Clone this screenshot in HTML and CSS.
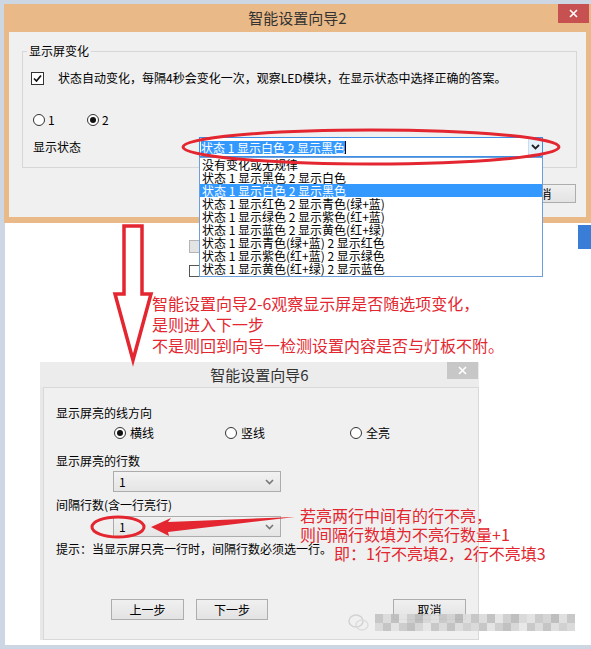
FILE: index.html
```html
<!DOCTYPE html>
<html lang="zh-CN">
<head>
  <meta charset="UTF-8" />
  <meta name="viewport" content="width=device-width, initial-scale=1.0"/>
  <title>智能设置向导</title>
  <link rel="stylesheet" href="styles.css">
</head>
<body>
<div class="desk">
  <div class="sheet"></div>

  <!-- Wizard step 2 -->
  <div class="win win-step2">
    <div class="titlebar">
      <span class="title">智能设置向导2</span>
      <span class="close close-red">
        <svg width="9" height="9" viewBox="0 0 9 9"><path d="M1 1L8 8M8 1L1 8" stroke="#fff" stroke-width="1.6"/></svg>
      </span>
    </div>
    <div class="client">
      <fieldset class="group">
        <legend>显示屏变化</legend>
        <div class="check-row">
          <span class="checkbox">
            <svg width="11" height="11" viewBox="0 0 11 11"><path d="M2 5.5L4.5 8L9 2.5" fill="none" stroke="#111" stroke-width="1.7"/></svg>
          </span>
          <span>状态自动变化，每隔4秒会变化一次，观察LED模块，在显示状态中选择正确的答案。</span>
        </div>
        <div class="radio-row">
          <span class="radio-item opt-1"><span class="radio"></span>1</span>
          <span class="radio-item"><span class="radio on"></span>2</span>
        </div>
        <div class="state-row">
          <span class="state-label">显示状态</span>
          <div class="combo">
            <span class="combo-sel">状态 1 显示白色 2 显示黑色</span><span class="caret"></span>
            <span class="combo-btn">
              <svg width="9" height="6" viewBox="0 0 9 6"><path d="M1 1L4.5 4.5L8 1" fill="none" stroke="#222" stroke-width="1.8"/></svg>
            </span>
          </div>
        </div>
      </fieldset>
      <div class="win-buttons"><span class="btn btn-back">取消</span></div>
    </div>
  </div>

  <!-- controls of a window lying underneath -->
  <div class="ghost-btn"></div>
  <div class="ghost-check"></div>
  <div class="scroll-thumb"></div>

  <!-- open drop-down of the combo -->
  <ul class="dropdown">
    <li>没有变化或无规律</li>
    <li>状态 1 显示黑色 2 显示白色</li>
    <li class="hot">状态 1 显示白色 2 显示黑色</li>
    <li>状态 1 显示红色 2 显示青色(绿+蓝)</li>
    <li>状态 1 显示绿色 2 显示紫色(红+蓝)</li>
    <li>状态 1 显示蓝色 2 显示黄色(红+绿)</li>
    <li>状态 1 显示青色(绿+蓝) 2 显示红色</li>
    <li>状态 1 显示紫色(红+蓝) 2 显示绿色</li>
    <li>状态 1 显示黄色(红+绿) 2 显示蓝色</li>
  </ul>

  <div class="note note-top">
    <div>智能设置向导2-6观察显示屏是否随选项变化，</div>
    <div>是则进入下一步</div>
    <div>不是则回到向导一检测设置内容是否与灯板不附。</div>
  </div>

  <!-- Wizard step 6 -->
  <div class="win win-step6">
    <div class="titlebar titlebar-gray">
      <span class="title">智能设置向导6</span>
      <span class="close close-gray">
        <svg width="9" height="9" viewBox="0 0 9 9"><path d="M1 1L8 8M8 1L1 8" stroke="#fff" stroke-width="1.6"/></svg>
      </span>
    </div>
    <div class="client client-step6">
      <div class="line">显示屏亮的线方向</div>
      <div class="dir-row">
        <span class="radio-item dir-h"><span class="radio on"></span>横线</span>
        <span class="radio-item dir-v"><span class="radio"></span>竖线</span>
        <span class="radio-item"><span class="radio"></span>全亮</span>
      </div>
      <div class="line gap-lg">显示屏亮的行数</div>
      <div class="select select-first">
        <span>1</span>
        <svg width="9" height="6" viewBox="0 0 9 6"><path d="M1 1L4.5 4.5L8 1" fill="none" stroke="#777" stroke-width="1.6"/></svg>
      </div>
      <div class="line">间隔行数(含一行亮行)</div>
      <div class="select select-second">
        <span>1</span>
        <svg width="9" height="6" viewBox="0 0 9 6"><path d="M1 1L4.5 4.5L8 1" fill="none" stroke="#777" stroke-width="1.6"/></svg>
      </div>
      <div class="line hint">提示：当显示屏只亮一行时，间隔行数必须选一行。</div>
      <div class="btn-row">
        <span class="btn">上一步</span>
        <span class="btn btn-next">下一步</span>
        <span class="btn btn-cancel">取消</span>
      </div>
    </div>
  </div>

  <div class="note note-side">
    <div>若亮两行中间有的行不亮，</div>
    <div>则间隔行数填为不亮行数量+1</div>
  </div>
  <div class="note note-eg">即：1行不亮填2，2行不亮填3</div>

  <!-- blurred watermark -->
  <svg class="wm-icon" width="24" height="20" viewBox="0 0 24 20">
    <ellipse cx="9" cy="8" rx="7" ry="6" fill="none" stroke="#d2d2d2" stroke-width="1.5"/>
    <ellipse cx="15" cy="12" rx="6" ry="5" fill="none" stroke="#dcdcdc" stroke-width="1.5"/>
  </svg>
  <div class="watermark"></div>

  <!-- red marks drawn over the screenshots -->
  <svg class="marks" width="591" height="649" viewBox="0 0 591 649">
    <ellipse cx="371" cy="147" rx="188" ry="17" fill="none" stroke="#e3262f" stroke-width="3"/>
    <polygon points="124,226 142,226 142,294 151,294 133,360 115,294 124,294" fill="none" stroke="#e3262f" stroke-width="3.5"/>
    <ellipse cx="118" cy="527" rx="26" ry="10" fill="none" stroke="#e3262f" stroke-width="3"/>
    <polygon points="151,527 171,518 168,522 295,517 168,532 169,536" fill="#e3262f"/>
  </svg>
</div>
</body>
</html>
```

FILE: styles.css
```css
* {
  box-sizing: border-box;
}

body {
  margin: 0;
  font-family: "Noto Sans CJK SC", "Noto Sans", sans-serif;
  font-size: 12px;
  color: #000;
}

.desk {
  position: relative;
  width: 591px;
  height: 649px;
  padding: 4px 0 4px 5px;
  background-color: #cdd7e3;
  overflow: hidden;
}

.sheet {
  width: 100%;
  height: 100%;
  background-color: #fff;
}

/* windows */
.win {
  position: absolute;
  display: flex;
  flex-direction: column;
}

.win-step2 {
  left: 4px;
  top: 4px;
  width: 587px;
  height: 219px;
  background-color: #e9b987;
}

.win-step6 {
  left: 40px;
  top: 362px;
  width: 439px;
  height: 278px;
  background-color: #e8e8e8;
}

.titlebar {
  position: relative;
  height: 28px;
  flex-shrink: 0;
  display: flex;
  align-items: center;
  justify-content: center;
}

.titlebar-gray {
  height: 25px;
  background-color: #ececec;
}

.title {
  font-size: 15px;
  line-height: 18px;
  color: #333;
}

.close {
  position: absolute;
  top: 0;
  display: flex;
  align-items: center;
  justify-content: center;
}

.close-red {
  right: 2px;
  width: 31px;
  height: 19px;
  background-color: #c75050;
}

.close-gray {
  right: 1px;
  width: 31px;
  height: 17px;
  background-color: #c7c7c7;
}

.client {
  flex: 1;
  margin: 0 5px 6px 5px;
  background-color: #f0f0f0;
}

/* step 2 content */
.group {
  margin: 12px 0 0 13px;
  width: 555px;
  min-width: 0;
  padding: 0 8px 10px 8px;
  border: 1px solid #d7d7d7;
}

.group legend {
  padding: 0 2px;
  margin-left: -4px;
  line-height: 14px;
}

.check-row {
  display: flex;
  align-items: center;
  gap: 14px;
  height: 14px;
  margin-top: 13px;
  line-height: 14px;
}

.checkbox {
  width: 13px;
  height: 13px;
  border: 1px solid #333;
  background-color: #fff;
  display: flex;
  align-items: center;
  justify-content: center;
}

.radio-row {
  display: flex;
  align-items: center;
  height: 14px;
  margin-top: 28px;
  padding-left: 2px;
  line-height: 14px;
}

.radio-item {
  display: flex;
  align-items: center;
  gap: 3px;
}

.opt-1 {
  width: 54px;
}

.radio {
  width: 12px;
  height: 12px;
  border: 1px solid #333;
  border-radius: 50%;
  background-color: #fff;
  display: flex;
  align-items: center;
  justify-content: center;
}

.radio.on::after {
  content: "";
  width: 6px;
  height: 6px;
  border-radius: 50%;
  background-color: #111;
}

.state-row {
  display: flex;
  align-items: center;
  height: 20px;
  margin-top: 10px;
  padding-left: 2px;
}

.state-label {
  width: 166px;
  line-height: 14px;
}

.combo {
  position: relative;
  width: 344px;
  height: 20px;
  border: 1px solid #3d8ee6;
  background-color: #fff;
  display: flex;
  align-items: center;
  padding-left: 1px;
}

.combo-sel {
  line-height: 13px;
  background-color: #3399ff;
  color: #fff;
  white-space: nowrap;
}

.caret {
  width: 1px;
  height: 13px;
  background-color: #000;
}

.combo-btn {
  position: absolute;
  right: 0;
  top: 0;
  width: 14px;
  height: 18px;
  display: flex;
  align-items: center;
  justify-content: center;
  background-color: #e5f1fb;
  border-left: 1px solid #c6dcef;
}

.win-buttons {
  display: flex;
  justify-content: flex-end;
  margin-top: 16px;
  padding-right: 10px;
}

.btn {
  height: 21px;
  width: 73px;
  border: 1px solid #adadad;
  background: linear-gradient(#f0f0f0, #e3e3e3);
  display: flex;
  align-items: center;
  justify-content: center;
  font-size: 12px;
  line-height: 14px;
}

.btn-back {
  height: 19px;
}

/* bits of a window under the dialog */
.ghost-btn {
  position: absolute;
  left: 189px;
  top: 240px;
  width: 60px;
  height: 13px;
  background-color: #e3e3e3;
  border: 1px solid #b4b4b4;
}

.ghost-check {
  position: absolute;
  left: 189px;
  top: 265px;
  width: 13px;
  height: 12px;
  background-color: #fff;
  border: 1px solid #555;
}

.scroll-thumb {
  position: absolute;
  left: 578px;
  top: 225px;
  width: 13px;
  height: 24px;
  background-color: #3a7dd6;
}

.dropdown {
  position: absolute;
  left: 199px;
  top: 157px;
  width: 344px;
  height: 120px;
  margin: 0;
  padding: 0;
  list-style: none;
  background-color: #fff;
  border: 1px solid #6f9fd8;
}

.dropdown li {
  height: 13px;
  line-height: 13px;
  padding-left: 2px;
  white-space: nowrap;
}

.dropdown li.hot {
  background-color: #3399ff;
  color: #fff;
}

/* red notes */
.note {
  position: absolute;
  color: #e3262f;
  font-size: 16px;
  white-space: nowrap;
}

.note-top {
  left: 152px;
  top: 293px;
  line-height: 21px;
}

.note-side {
  left: 300px;
  top: 506px;
  line-height: 19px;
}

.note-eg {
  left: 334px;
  top: 544px;
  line-height: 19px;
}

/* step 6 content */
.client-step6 {
  margin: 0 0 0 3px;
  padding: 18px 0 0 12px;
  border: 1px solid #d9d9d9;
}

.line {
  line-height: 14px;
  white-space: nowrap;
}

.gap-lg {
  margin-top: 14px;
}

.dir-row {
  display: flex;
  align-items: center;
  height: 14px;
  margin-top: 6px;
  padding-left: 58px;
  line-height: 14px;
}

.dir-row .radio-item {
  gap: 4px;
}

.dir-h {
  width: 111px;
}

.dir-v {
  width: 125px;
}

.select {
  width: 168px;
  height: 21px;
  margin-left: 57px;
  border: 1px solid #acacac;
  background: linear-gradient(#f2f2f2, #e5e5e5);
  display: flex;
  align-items: center;
  justify-content: space-between;
  padding: 0 6px 0 5px;
  line-height: 14px;
}

.select-first {
  margin-top: 3px;
  margin-bottom: 6px;
}

.select-second {
  margin-top: 4px;
}

.hint {
  margin-top: 5px;
}

.btn-row {
  display: flex;
  margin-top: 43px;
}

.btn-row .btn:first-child {
  margin-left: 55px;
}

.btn-next {
  margin-left: 12px;
  width: 72px;
}

.btn-cancel {
  margin-left: 125px;
}

/* watermark */
.wm-icon {
  position: absolute;
  left: 347px;
  top: 613px;
}

.watermark {
  position: absolute;
  left: 375px;
  top: 614px;
  width: 200px;
  height: 17px;
  opacity: 0.9;
  filter: blur(0.6px);
  background:
    repeating-linear-gradient(90deg,
      #c3c3c3 0 8px, #dadada 8px 16px, #bdbdbd 16px 24px, #e4e4e4 24px 32px,
      #cbcbcb 32px 40px, #b9b9b9 40px 48px, #d6d6d6 48px 56px, #e0e0e0 56px 64px,
      #c6c6c6 64px 72px, #d1d1d1 72px 80px, #b7b7b7 80px 88px, #dddddd 88px 96px) top / 100% 9px no-repeat,
    repeating-linear-gradient(90deg,
      #d8d8d8 0 8px, #c1c1c1 8px 16px, #e2e2e2 16px 24px, #cacaca 24px 32px,
      #bbbbbb 32px 40px, #d4d4d4 40px 48px, #e6e6e6 48px 56px, #c4c4c4 56px 64px,
      #d9d9d9 64px 72px, #bfbfbf 72px 80px, #dcdcdc 80px 88px, #cdcdcd 88px 96px) bottom / 100% 8px no-repeat;
}

.marks {
  position: absolute;
  left: 0;
  top: 0;
  pointer-events: none;
}
```
